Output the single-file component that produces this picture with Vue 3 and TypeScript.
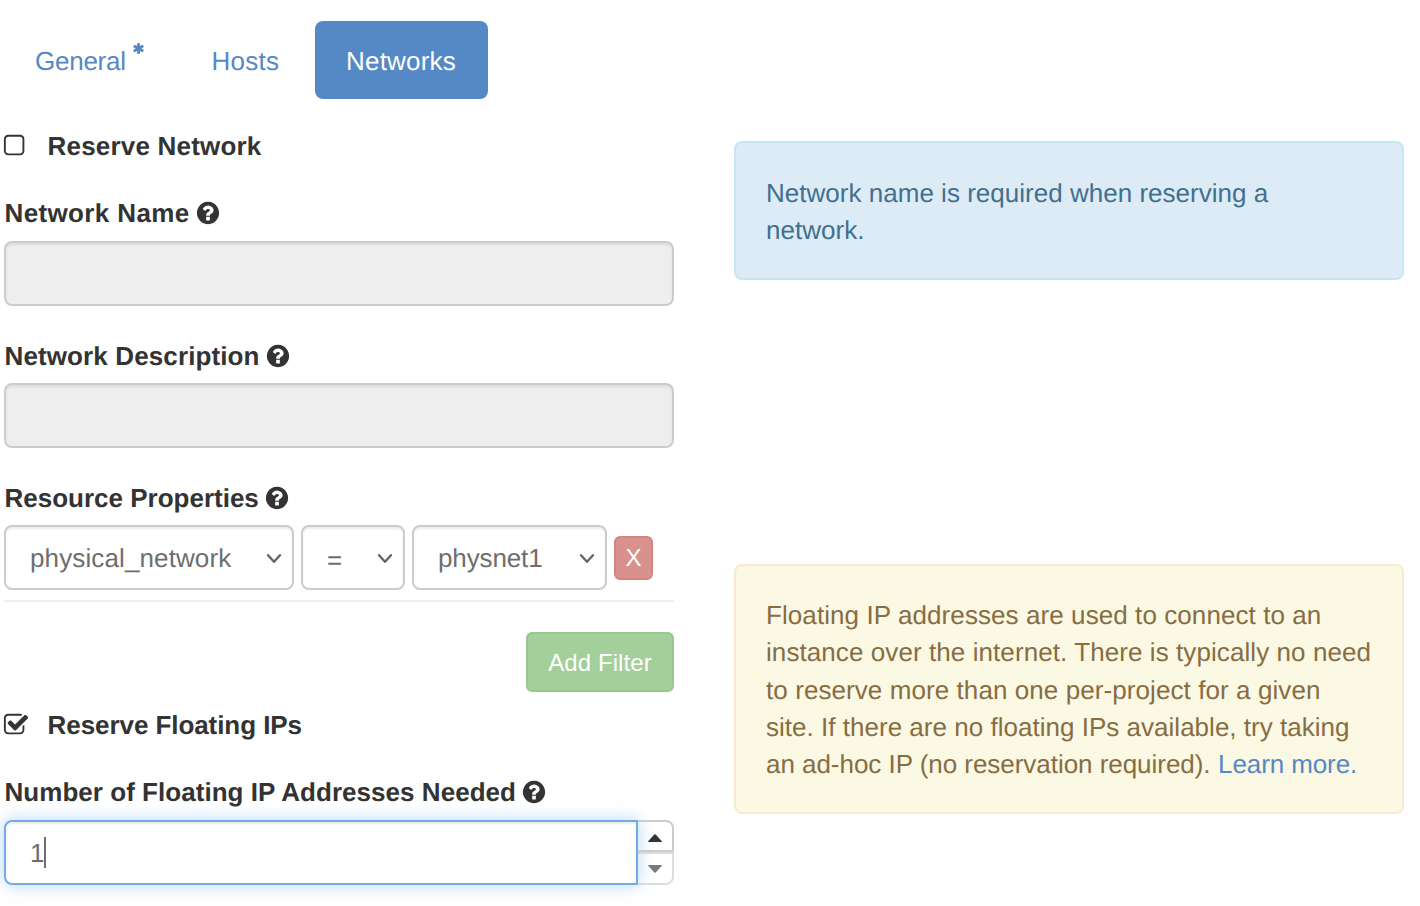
<script setup lang="ts">
import { ref } from 'vue'

interface Tab { id: string; label: string; required?: boolean }
interface Filter { id: string; value: string }

const tabs: Tab[] = [
  { id: 'general', label: 'General', required: true },
  { id: 'hosts', label: 'Hosts' },
  { id: 'networks', label: 'Networks' },
]
const active = ref('networks')
const reserveNetwork = ref(false)
const reserveIps = ref(true)
const count = ref(1)
const filters: Filter[] = [
  { id: 'property', value: 'physical_network' },
  { id: 'operator', value: '=' },
  { id: 'value', value: 'physnet1' },
]

const help = 'M1024 1376v-192q0-14-9-23t-23-9h-192q-14 0-23 9t-9 23v192q0 14 9 23t23 9h192q14 0 23-9t9-23zm256-672q0-88-55.500-163t-138.500-116-170-41q-243 0-371 213-15 24 8 42l132 100q7 6 19 6 16 0 25-12 53-68 86-92 34-24 86-24 48 0 85.500 26t37.500 59q0 38-20 61t-68 45q-63 28-115.500 86.500t-52.500 125.500v36q0 14 9 23t23 9h192q14 0 23-9t9-23q0-19 21.500-49.500t54.500-49.500q32-18 49-28.500t46-35 44.500-48 28-60.500 12.500-81zm384 192q0 209-103 385.500t-279.500 279.500-385.500 103-385.500-103-279.500-279.500-103-385.500 103-385.500 279.500-279.500 385.500-103 385.500 103 279.500 279.500 103 385.500z'
const square = 'M1184 256h-832q-66 0-113 47t-47 113v832q0 66 47 113t113 47h832q66 0 113-47t47-113v-832q0-66-47-113t-113-47zm288 160v832q0 119-84.500 203.500t-203.500 84.500h-832q-119 0-203.500-84.500t-84.500-203.500v-832q0-119 84.500-203.500t203.500-84.500h832q119 0 203.500 84.500t84.500 203.500z'
const squareCheck = 'M1472 930v318q0 119-84.500 203.500t-203.500 84.500h-832q-119 0-203.500-84.500t-84.500-203.500v-832q0-119 84.500-203.500t203.500-84.500h832q63 0 117 25 15 7 18 23 3 17-9 29l-49 49q-10 10-23 10-3 0-9-2-23-6-45-6h-832q-66 0-113 47t-47 113v832q0 66 47 113t113 47h832q66 0 113-47t47-113v-254q0-13 9-22l64-64q10-10 23-10 6 0 12 3 20 8 20 29zm231-489l-814 814q-24 24-57 24t-57-24l-430-430q-24-24-24-57t24-57l110-110q24-24 57-24t57 24l263 263 647-647q24-24 57-24t57 24l110 110q24 24 24 57t-24 57z'
const asterisk = 'M1546 1050q46 26 59.500 77.500t-12.500 97.500l-64 110q-26 46-77.500 59.500t-97.500-12.500l-266-153v307q0 52-38 90t-90 38h-128q-52 0-90-38t-38-90v-307l-266 153q-46 26-97.500 12.500t-77.500-59.500l-64-110q-26-46-12.500-97.500t59.500-77.500l266-154-266-154q-46-26-59.500-77.500t12.500-97.500l64-110q26-46 77.500-59.500t97.500 12.500l266 153v-307q0-52 38-90t90-38h128q52 0 90 38t38 90v307l266-153q46-26 97.500-12.500t77.500 59.500l64 110q26 46 12.500 97.500t-59.500 77.500l-266 154z'
</script>

<template>
  <main class="page">
    <nav class="tabs">
      <a v-for="t in tabs" :key="t.id" class="tab" :class="[t.id, { active: active === t.id }]" @click="active = t.id">
        <span>{{ t.label }}</span>
        <svg v-if="t.required" class="asterisk" viewBox="0 0 1792 1792"><path :d="asterisk" /></svg>
      </a>
    </nav>

    <div class="columns">
      <form class="form" @submit.prevent>
        <label class="check" @click="reserveNetwork = !reserveNetwork">
          <svg class="box" viewBox="0 0 1792 1792"><path :d="reserveNetwork ? squareCheck : square" /></svg>
          <span class="t-network">Reserve Network</span>
        </label>
        <div class="label first">
          <span class="t-name">Network Name</span>
          <svg class="help" viewBox="0 0 1792 1792"><path :d="help" /></svg>
        </div>
        <div class="control disabled"></div>
        <div class="label second">
          <span class="t-desc">Network Description</span>
          <svg class="help" viewBox="0 0 1792 1792"><path :d="help" /></svg>
        </div>
        <div class="control disabled"></div>
        <div class="label third">
          <span class="t-res">Resource Properties</span>
          <svg class="help" viewBox="0 0 1792 1792"><path :d="help" /></svg>
        </div>
        <div class="filters">
          <div v-for="f in filters" :key="f.id" class="control select" :class="f.id">
            <span>{{ f.value }}</span>
            <svg class="chevron" viewBox="0 0 16 12"><path d="M2 2.200L8 8.800L14 2.200" /></svg>
          </div>
          <button type="button" class="btn remove">X</button>
        </div>
        <div class="actions"><button type="button" class="btn add">Add Filter</button></div>
        <label class="check ips" @click="reserveIps = !reserveIps">
          <svg class="box" viewBox="0 0 1792 1792"><path :d="reserveIps ? squareCheck : square" /></svg>
          <span class="t-ips">Reserve Floating IPs</span>
        </label>
        <div class="label first">
          <span class="t-count">Number of Floating IP Addresses Needed</span>
          <svg class="help" viewBox="0 0 1792 1792"><path :d="help" /></svg>
        </div>
        <div class="number">
          <div class="control focused"><span class="amount">{{ count }}</span><i class="caret"></i></div>
          <div class="spinner">
            <button type="button" class="step up" @click="count++"><svg viewBox="0 0 14 8"><path d="M.6 8Q-.3 8 .4 7.100L6.300.5Q7 0 7.700.5L13.600 7.100Q14.300 8 13.400 8Z" /></svg></button>
            <button type="button" class="step down" @click="count--"><svg viewBox="0 0 14 8"><path d="M.6 0Q-.3 0 .4 .9L6.300 7.500Q7 8 7.700 7.500L13.600.9Q14.300 0 13.400 0Z" /></svg></button>
          </div>
        </div>
      </form>

      <aside class="notes">
        <p class="alert info">Network name is required when reserving a network.</p>
        <div class="alert warning">
          <div>Floating IP addresses are used to connect to an</div>
          <div>instance over the internet. There is typically no need</div>
          <div>to reserve more than one per-project for a given</div>
          <div class="tight">site. If there are no floating IPs available, try taking</div>
          <div class="last"><span>an ad-hoc IP (no reservation required).</span><a class="link">Learn more.</a></div>
        </div>
      </aside>
    </div>
  </main>
</template>

<style>
body { margin: 0; background: #fff; }
</style>

<style scoped>
* { box-sizing: border-box; }
.page {
  height: 906px;
  padding: 21px 16px 0 4px;
  overflow: hidden;
  color: #333;
  font-family: "Liberation Sans", Arial, sans-serif;
  font-size: 26px;
  line-height: 37px;
  letter-spacing: .09px;
  text-rendering: geometricPrecision;
}
svg { display: block; flex: none; fill: currentColor; }
.tabs { display: flex; gap: 4px; height: 78px; }
.tab { display: flex; align-items: center; height: 78px; padding: 2px 0 0 31px; border-radius: 8px; color: #5489c5; cursor: pointer; }
.general { width: 172px; letter-spacing: -.25px; }
.hosts { width: 131px; padding-left: 31.500px; letter-spacing: .25px; }
.networks { width: 173px; letter-spacing: .2px; }
.tab.active { background: #5489c5; color: #fff; }
.asterisk { width: 13px; height: 13px; margin: 0 0 25px 6.500px; }
.columns { display: grid; grid-template-columns: 670px 670px; gap: 60px; }
.form { padding-top: 29px; }
.check, .label { display: flex; align-items: center; height: 37px; font-weight: 700; white-space: nowrap; }
.box { width: 26px; height: 26px; margin: 0 18.400px 2px -.8px; }
.label { gap: 7px; padding-left: .5px; }
.help { width: 26px; height: 26px; margin: 0 0 2px -2px; }
.t-network { letter-spacing: .19px; }
.t-name { letter-spacing: .37px; }
.t-desc { letter-spacing: .12px; }
.t-res { letter-spacing: 0; }
.t-ips { letter-spacing: -.07px; }
.t-count { letter-spacing: .04px; }
.first { margin-top: 30px; margin-bottom: 9px; }
.second { margin-top: 32px; margin-bottom: 8px; }
.third { margin-top: 32px; margin-bottom: 8px; }
.control { height: 65px; border: 2px solid #ccc; border-radius: 8px; background: #fff; color: #6e6e6e; box-shadow: inset 0 2px 2px rgba(0, 0, 0, .075); }
.disabled { background: #eee; }
.filters { display: flex; align-items: center; height: 77px; padding-bottom: 10px; border-bottom: 2px solid #eee; }
.select { display: flex; align-items: center; justify-content: space-between; padding: 2px 10px 0 24px; }
.property { width: 290px; margin-right: 7px; letter-spacing: .12px; }
.operator { width: 104px; margin-right: 7px; }
.operator span { padding-top: 3px; }
.value { width: 195px; margin-right: 7px; letter-spacing: -.12px; }
.chevron { width: 16px; height: 12px; margin-top: 1px; fill: none; stroke: #666; stroke-width: 2.400; stroke-linecap: round; stroke-linejoin: round; }
.btn { padding: 0; border: 2px solid; border-radius: 6px; color: #fff; font: inherit; font-size: 24px; letter-spacing: inherit; }
.remove { width: 39px; height: 44px; background: #d9918e; border-color: #d6837f; line-height: 40px; }
.actions { display: flex; justify-content: flex-end; padding-top: 30px; }
.add { width: 148px; height: 60px; background: #a3cf9b; border-color: #98c890; }
.ips { margin-top: 15px; }
.number { display: flex; }
.focused { display: flex; align-items: center; width: 634px; padding-left: 24px; border-color: #73abe6; border-radius: 8px 0 0 8px; box-shadow: inset 0 2px 2px rgba(0, 0, 0, .075), 0 0 16px rgba(102, 175, 233, .5); }
.amount { padding-top: 2px; letter-spacing: -.6px; }
.caret { width: 2px; height: 31px; background: #6e6e6e; }
.spinner { display: flex; flex-direction: column; width: 36px; }
.step { display: flex; align-items: center; justify-content: center; padding: 0; border: 2px solid #ccc; border-left: 0; background: transparent; color: #333; }
.step svg { width: 14px; height: 8px; }
.up { height: 32px; padding-top: 4px; border-radius: 0 8px 0 0; }
.down { height: 33px; border-radius: 0 0 8px 0; opacity: .65; }
.notes { padding-top: 42px; }
.alert { margin: 0; padding: 32px 30px 30px; border: 2px solid; border-radius: 8px; line-height: 37.140px; }
.info { height: 139px; background: #ddebf6; border-color: #c5e7f0; color: #41708f; letter-spacing: .02px; }
.warning { height: 250px; margin-top: 284px; padding-top: 31.290px; background: #fbf8e4; border-color: #f7ebcf; color: #876d42; letter-spacing: .08px; white-space: nowrap; }
.tight { letter-spacing: .02px; }
.last { display: flex; gap: 7.500px; letter-spacing: -.04px; }
.link { color: #5489c5; letter-spacing: -.1px; }
</style>
